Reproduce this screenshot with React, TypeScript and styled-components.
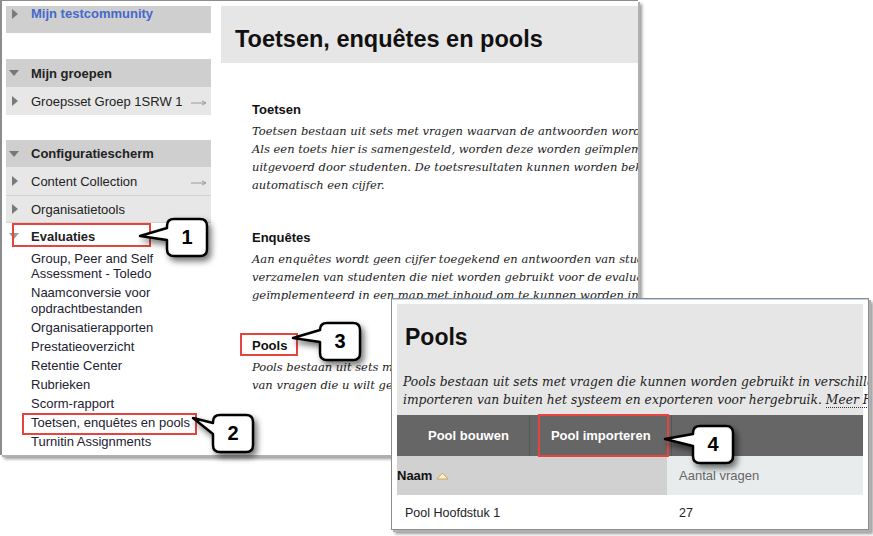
import React from "react";
import styled, { createGlobalStyle } from "styled-components";

const sans = `"Liberation Sans", Arial, sans-serif`;
const serif = `"DejaVu Serif", Georgia, serif`;

const GlobalStyle = createGlobalStyle`
  html, body {
    margin: 0;
    padding: 0;
    background: #fff;
  }
  body {
    font-family: ${sans};
  }
`;

const Stage = styled.div`
  position: relative;
  width: 873px;
  height: 536px;
  overflow: hidden;
  background: #fff;
`;

/* ---------- left screenshot: sidebar + main page ---------- */

const Shot = styled.div`
  display: flex;
  gap: 10px;
  width: 632px;
  height: 449px;
  padding: 5px 0 0 4px;
  border-top: 1px solid #8c8c8c;
  border-left: 2px solid #8c8c8c;
  background: #fff;
  overflow: hidden;
  box-shadow: 2px 2px 0 #b0b0b0, 4px 4px 3px rgba(0, 0, 0, 0.4);
`;

const Sidebar = styled.nav`
  width: 205px;
  flex-shrink: 0;
  display: flex;
  flex-direction: column;
`;

const Block = styled.div<{ $gap?: number }>`
  margin-top: ${(p) => p.$gap ?? 0}px;
`;

type RowKind = "link" | "head" | "item" | "open";

const Row = styled.div<{ $kind: RowKind; $h?: number; $sep?: boolean }>`
  display: flex;
  align-items: ${(p) => (p.$kind === "link" ? "flex-start" : "center")};
  height: ${(p) => p.$h ?? 28}px;
  box-sizing: border-box;
  padding: 0 4px 0 6px;
  font-size: 13px;
  line-height: 15px;
  white-space: nowrap;
  font-weight: ${(p) => (p.$kind === "item" ? "normal" : "bold")};
  color: ${(p) => (p.$kind === "link" ? "#4568cc" : "#222")};
  background: ${(p) =>
    p.$kind === "head" || p.$kind === "link"
      ? "#cfcfcf"
      : p.$kind === "item"
      ? "#e7e7e7"
      : "#fff"};
  border-bottom: ${(p) => (p.$sep ? "1px solid #d2d2d2" : "none")};
`;

const CaretSlot = styled.span`
  width: 19px;
  flex-shrink: 0;
  display: flex;
  align-items: center;
  height: 15px;
`;

const Caret = styled.span<{ $down?: boolean; $light?: boolean }>`
  width: 0;
  height: 0;
  ${(p) =>
    p.$down
      ? `
    margin-left: -3px;
    border-left: 5.5px solid transparent;
    border-right: 5.5px solid transparent;
    border-top: 6px solid ${p.$light ? "#9a9a9a" : "#777"};
  `
      : `
    border-top: 5px solid transparent;
    border-bottom: 5px solid transparent;
    border-left: 6px solid #7a7a7a;
  `}
`;

const RowArrow = styled.svg`
  margin-left: auto;
  width: 16px;
  height: 6px;
  margin-top: 3px;
`;

const SubList = styled.ul`
  list-style: none;
  margin: 0;
  padding: 0 0 0 25px;
`;

const SubItem = styled.li`
  font-size: 13px;
  line-height: 15.5px;
  padding: 1.75px 0;
  color: #1c2230;
`;

const Main = styled.main`
  width: 417px;
  flex-shrink: 0;
  overflow: hidden;
`;

const PageHeader = styled.header`
  height: 57px;
  box-sizing: border-box;
  background: #e6e6e6;
  padding: 19px 0 0 14px;
`;

const PageTitle = styled.h1`
  margin: 0;
  font-size: 23.5px;
  line-height: 28px;
  font-weight: bold;
  color: #111;
  white-space: nowrap;
`;

const Body = styled.div`
  padding: 39px 0 0 31px;
`;

const Section = styled.section<{ $gap?: number }>`
  margin-top: ${(p) => p.$gap ?? 0}px;
`;

const SectionTitle = styled.h3`
  margin: 0 0 5px;
  font-size: 13px;
  line-height: 15px;
  font-weight: bold;
  color: #111;
`;

const Para = styled.p<{ $size?: number }>`
  margin: 0;
  font-family: ${serif};
  font-style: italic;
  font-size: ${(p) => p.$size ?? 11.5}px;
  line-height: 18px;
  color: #222;
  white-space: nowrap;
`;

const Line = styled.span`
  display: block;
`;

/* ---------- pools window ---------- */

const PoolsWindow = styled.div`
  position: absolute;
  left: 391px;
  top: 298px;
  width: 466px;
  padding: 5px 5px 3px;
  border: 1px solid #8c8c8c;
  background: #fff;
  overflow: hidden;
  box-shadow: inset 0 1px 0 #bcd4ec, 2px 2px 0 #b0b0b0, 4px 4px 3px rgba(0, 0, 0, 0.4);
`;

const PoolsHead = styled.div`
  height: 111px;
  box-sizing: border-box;
  background: #e6e6e6;
  padding: 20px 0 0 6px;
`;

const PoolsTitle = styled.h2`
  margin: 0 0 23px 2px;
  font-size: 23px;
  line-height: 26px;
  font-weight: bold;
  color: #111;
`;

const HelpLink = styled.span`
  border-bottom: 1px dotted #333;
`;

const Toolbar = styled.div`
  display: flex;
  height: 41px;
  background: #666;
  padding-left: 10px;
`;

const ToolButton = styled.div`
  display: flex;
  align-items: center;
  padding: 0 20px 0 21px;
  font-size: 13px;
  font-weight: bold;
  color: #fff;
  border-right: 1px solid #575757;
  white-space: nowrap;
`;

const TableRow = styled.div<{ $head?: boolean }>`
  display: grid;
  grid-template-columns: 270px 1fr;
  height: ${(p) => (p.$head ? 39 : 31)}px;
  font-size: ${(p) => (p.$head ? 13 : 12.5)}px;
`;

const Cell = styled.div<{ $bg?: string; $pad?: number; $bold?: boolean; $color?: string; $top?: number }>`
  display: flex;
  align-items: center;
  background: ${(p) => p.$bg ?? "#fff"};
  padding-left: ${(p) => p.$pad ?? 0}px;
  padding-top: ${(p) => p.$top ?? 0}px;
  font-weight: ${(p) => (p.$bold ? "bold" : "normal")};
  color: ${(p) => p.$color ?? "#222"};
  white-space: nowrap;
`;

const SortIcon = styled.svg`
  width: 13px;
  height: 8px;
  margin-left: 4px;
`;

/* ---------- annotations ---------- */

const Highlight = styled.div<{ $x: number; $y: number; $w: number; $h: number }>`
  position: absolute;
  left: ${(p) => p.$x}px;
  top: ${(p) => p.$y}px;
  width: ${(p) => p.$w}px;
  height: ${(p) => p.$h}px;
  box-sizing: border-box;
  border: 2.5px solid #e4463f;
`;

const CalloutBox = styled.div<{ $x: number; $y: number }>`
  position: absolute;
  left: ${(p) => p.$x}px;
  top: ${(p) => p.$y}px;
  width: 40px;
  height: 37px;
`;

const CalloutShape = styled.svg`
  position: absolute;
  left: 0;
  top: 0;
  width: 40px;
  height: 37px;
  overflow: visible;
  filter: drop-shadow(3px 4px 3px rgba(0, 0, 0, 0.55));
`;

const CalloutLabel = styled.span`
  position: relative;
  display: flex;
  align-items: center;
  justify-content: center;
  width: 100%;
  height: 100%;
  font-size: 20px;
  font-weight: bold;
  color: #000;
`;

type CalloutProps = { x: number; y: number; tx: number; ty: number; b1: number; b2: number; label: string };

const Callout = ({ x, y, tx, ty, b1, b2, label }: CalloutProps) => {
  const w = 40;
  const h = 37;
  const r = 7;
  const d = `M ${r} 0 H ${w - r} Q ${w} 0 ${w} ${r} V ${h - r} Q ${w} ${h} ${w - r} ${h} H ${r} Q 0 ${h} 0 ${h - r} V ${b2} L ${tx} ${ty} L 0 ${b1} V ${r} Q 0 0 ${r} 0 Z`;
  return (
    <CalloutBox $x={x} $y={y}>
      <CalloutShape viewBox={`0 0 ${w} ${h}`}>
        <path d={d} fill="#fff" stroke="#000" strokeWidth="2.5" strokeLinejoin="round" />
      </CalloutShape>
      <CalloutLabel>{label}</CalloutLabel>
    </CalloutBox>
  );
};

const Arrow = () => (
  <RowArrow viewBox="0 0 16 6">
    <path d="M0 3 H14 M11 1 L15 3 L11 5" stroke="#9a9a9a" strokeWidth="1" fill="none" />
  </RowArrow>
);

const App = () => {
  const subItems = [
    ["Group, Peer and Self", "Assessment - Toledo"],
    ["Naamconversie voor", "opdrachtbestanden"],
    ["Organisatierapporten"],
    ["Prestatieoverzicht"],
    ["Retentie Center"],
    ["Rubrieken"],
    ["Scorm-rapport"],
    ["Toetsen, enquêtes en pools"],
    ["Turnitin Assignments"],
  ];

  return (
    <Stage>
      <GlobalStyle />
      <Shot>
        <Sidebar>
          <Row $kind="link" $h={27}>
            <CaretSlot>
              <Caret />
            </CaretSlot>
            Mijn testcommunity
          </Row>

          <Block $gap={26}>
            <Row $kind="head">
              <CaretSlot>
                <Caret $down />
              </CaretSlot>
              Mijn groepen
            </Row>
            <Row $kind="item">
              <CaretSlot>
                <Caret />
              </CaretSlot>
              Groepsset Groep 1SRW 1
              <Arrow />
            </Row>
          </Block>

          <Block $gap={25}>
            <Row $kind="head" $h={27}>
              <CaretSlot>
                <Caret $down />
              </CaretSlot>
              Configuratiescherm
            </Row>
            <Row $kind="item" $h={29} $sep>
              <CaretSlot>
                <Caret />
              </CaretSlot>
              Content Collection
              <Arrow />
            </Row>
            <Row $kind="item" $h={27} $sep>
              <CaretSlot>
                <Caret />
              </CaretSlot>
              Organisatietools
            </Row>
            <Row $kind="open" $h={26}>
              <CaretSlot>
                <Caret $down $light />
              </CaretSlot>
              Evaluaties
            </Row>
            <SubList>
              {subItems.map((lines, i) => (
                <SubItem key={i}>
                  {lines.map((l) => (
                    <Line key={l}>{l}</Line>
                  ))}
                </SubItem>
              ))}
            </SubList>
          </Block>
        </Sidebar>

        <Main>
          <PageHeader>
            <PageTitle>Toetsen, enquêtes en pools</PageTitle>
          </PageHeader>
          <Body>
            <Section>
              <SectionTitle>Toetsen</SectionTitle>
              <Para>
                <Line>Toetsen bestaan uit sets met vragen waarvan de antwoorden worden beoordeeld.</Line>
                <Line>Als een toets hier is samengesteld, worden deze worden geïmplementeerd in een map</Line>
                <Line>uitgevoerd door studenten. De toetsresultaten kunnen worden bekeken en krijgen</Line>
                <Line>automatisch een cijfer.</Line>
              </Para>
            </Section>
            <Section $gap={36}>
              <SectionTitle>Enquêtes</SectionTitle>
              <Para>
                <Line>Aan enquêtes wordt geen cijfer toegekend en antwoorden van studenten zijn anoniem.</Line>
                <Line>verzamelen van studenten die niet worden gebruikt voor de evaluatie van prestaties.</Line>
                <Line>geïmplementeerd in een map met inhoud om te kunnen worden ingevuld door studenten.</Line>
              </Para>
            </Section>
            <Section $gap={34}>
              <SectionTitle>Pools</SectionTitle>
              <Para>
                <Line>Pools bestaan uit sets met vragen die kunnen worden gebruikt in verschillende toetsen.</Line>
                <Line>van vragen die u wilt gebruiken in meerdere toetsen en enquêtes.</Line>
              </Para>
            </Section>
          </Body>
        </Main>
      </Shot>

      <PoolsWindow>
        <PoolsHead>
          <PoolsTitle>Pools</PoolsTitle>
          <Para $size={12.3}>
            <Line>Pools bestaan uit sets met vragen die kunnen worden gebruikt in verschillende toetsen en</Line>
            <Line>
              importeren van buiten het systeem en exporteren voor hergebruik. <HelpLink>Meer Help</HelpLink>
            </Line>
          </Para>
        </PoolsHead>
        <Toolbar>
          <ToolButton>Pool bouwen</ToolButton>
          <ToolButton>Pool importeren</ToolButton>
        </Toolbar>
        <TableRow $head>
          <Cell $bg="#d1d1d1" $bold $color="#111">
            Naam
            <SortIcon viewBox="0 0 13 8">
              <path d="M1 7 L6.5 1 L12 7 Z" fill="#fbf0cf" stroke="#c9a85a" strokeWidth="1" />
            </SortIcon>
          </Cell>
          <Cell $bg="#e8ecec" $pad={12} $color="#666">
            Aantal vragen
          </Cell>
        </TableRow>
        <TableRow>
          <Cell $pad={8} $top={4}>
            Pool Hoofdstuk 1
          </Cell>
          <Cell $pad={12} $top={4}>
            27
          </Cell>
        </TableRow>
      </PoolsWindow>

      <Highlight $x={12} $y={223} $w={139} $h={24} />
      <Highlight $x={22} $y={413} $w={175} $h={22} />
      <Highlight $x={240} $y={333} $w={58} $h={23} />
      <Highlight $x={538} $y={414} $w={131} $h={43} />

      <Callout x={167} y={219} tx={-27} ty={17} b1={9} b2={21} label="1" />
      <Callout x={213} y={415} tx={-20} ty={3} b1={8} b2={19} label="2" />
      <Callout x={320} y={323} tx={-27} ty={15} b1={7} b2={19} label="3" />
      <Callout x={693} y={426} tx={-28} ty={13} b1={8} b2={20} label="4" />
    </Stage>
  );
};

export default App;
